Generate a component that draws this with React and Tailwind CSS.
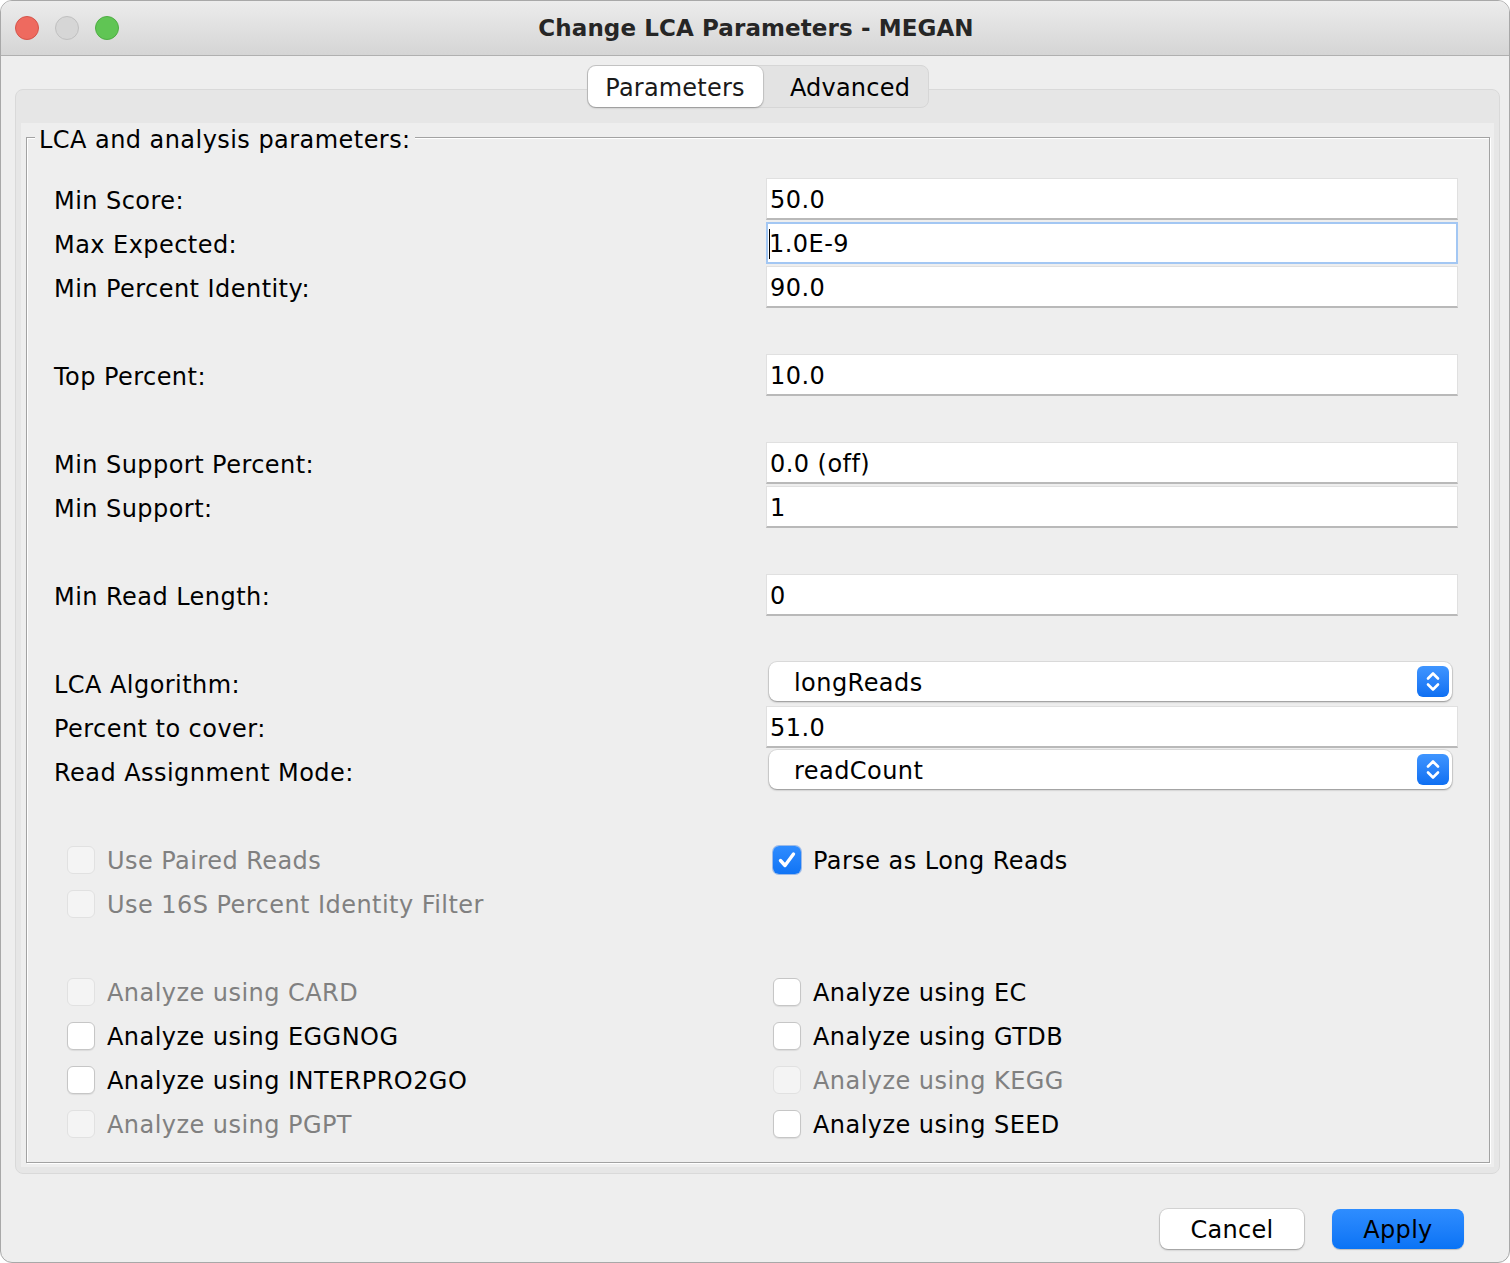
import React from "react";

const FONT = "font-['DejaVu_Sans','Noto_Sans',sans-serif]";

function TextField({ value, focused }) {
  if (focused) {
    return (
      <div className="h-[42px] bg-white border-2 border-[#a3c7f3] flex items-center pl-[1px] pt-[2px] text-[24px] tracking-[0.45px] text-black">
        <span className="inline-block w-px h-[30px] bg-black mr-[-1px]" />
        <span>{value}</span>
      </div>
    );
  }
  return (
    <div className="h-[42px] bg-white border border-[#e0e0e0] border-b-2 border-b-[#b9b9b9] flex items-center pl-[3px] pt-[2px] text-[24px] tracking-[0.45px] text-black">
      {value}
    </div>
  );
}

function Combo({ value }) {
  return (
    <div className="ml-[3px] mr-[6px] h-[39px] rounded-[8px] bg-white shadow-[0_0_0_1px_rgba(0,0,0,0.07),0_1px_2px_rgba(0,0,0,0.35)] flex items-center justify-between pl-[25px] pr-[3px] text-[24px] tracking-[0.45px] text-black">
      <span className="pt-[2px]">{value}</span>
      <div className="w-[32px] h-[31px] rounded-[6px] bg-gradient-to-b from-[#3f95ff] to-[#0d6ff2] flex items-center justify-center">
        <svg width="32" height="31" viewBox="0 0 32 31" fill="none" stroke="white" strokeWidth="2.6" strokeLinecap="round" strokeLinejoin="round">
          <path d="M11 12.5 L16 7.5 L21 12.5" />
          <path d="M11 18.5 L16 23.5 L21 18.5" />
        </svg>
      </div>
    </div>
  );
}

function Checkbox({ label, state }) {
  let box;
  if (state === "checked") {
    box = (
      <div className="w-[28px] h-[28px] rounded-[6px] bg-gradient-to-b from-[#2e8cff] to-[#0f74f5] shadow-[0_0_0_1px_rgba(0,90,220,0.35)] flex items-center justify-center">
        <svg width="28" height="28" viewBox="0 0 28 28" fill="none" stroke="white" strokeWidth="3.4" strokeLinecap="round" strokeLinejoin="round">
          <path d="M7.5 14.5 L12 19.5 L20.5 8" />
        </svg>
      </div>
    );
  } else if (state === "enabled") {
    box = (
      <div className="w-[28px] h-[28px] rounded-[6px] bg-white border border-[#c6c6c6] shadow-[0_1px_1px_rgba(0,0,0,0.08)]" />
    );
  } else {
    box = (
      <div className="w-[28px] h-[28px] rounded-[6px] bg-[#f4f4f4] border border-[#e1e1e1]" />
    );
  }
  return (
    <div className="flex items-center gap-[12px]">
      {box}
      <span className={`text-[24px] tracking-[0.45px] pt-[2px] ${state === "disabled" ? "text-[#808080]" : "text-black"}`}>{label}</span>
    </div>
  );
}

const fieldRows = [
  { label: "Min Score:", value: "50.0" },
  { label: "Max Expected:", value: "1.0E-9", focused: true },
  { label: "Min Percent Identity:", value: "90.0" },
  null,
  { label: "Top Percent:", value: "10.0" },
  null,
  { label: "Min Support Percent:", value: "0.0 (off)" },
  { label: "Min Support:", value: "1" },
  null,
  { label: "Min Read Length:", value: "0" },
  null,
  { label: "LCA Algorithm:", combo: "longReads" },
  { label: "Percent to cover:", value: "51.0" },
  { label: "Read Assignment Mode:", combo: "readCount" },
  null,
];

const checkRows = [
  [{ label: "Use Paired Reads", state: "disabled" }, { label: "Parse as Long Reads", state: "checked" }],
  [{ label: "Use 16S Percent Identity Filter", state: "disabled" }, null],
  null,
  [{ label: "Analyze using CARD", state: "disabled" }, { label: "Analyze using EC", state: "enabled" }],
  [{ label: "Analyze using EGGNOG", state: "enabled" }, { label: "Analyze using GTDB", state: "enabled" }],
  [{ label: "Analyze using INTERPRO2GO", state: "enabled" }, { label: "Analyze using KEGG", state: "disabled" }],
  [{ label: "Analyze using PGPT", state: "disabled" }, { label: "Analyze using SEED", state: "enabled" }],
];

export default function App() {
  return (
    <div className={`w-[1510px] h-[1263px] bg-white ${FONT}`}>
      <div className="w-full h-full rounded-[12px] border border-[#a8a8a8] bg-[#eeeeee] overflow-hidden flex flex-col">
        {/* Title bar */}
        <div className="h-[55px] shrink-0 bg-gradient-to-b from-[#ececec] to-[#d5d5d5] border-b border-[#b0b0b0] grid grid-cols-[1fr_auto_1fr] items-center">
          <div className="flex items-center gap-[16px] pl-[14px]">
            <div className="w-[24px] h-[24px] rounded-full bg-[#ee6a5f] border border-[#d5544a]" />
            <div className="w-[24px] h-[24px] rounded-full bg-[#d6d6d6] border border-[#c0c0c0]" />
            <div className="w-[24px] h-[24px] rounded-full bg-[#60c554] border border-[#4ead43]" />
          </div>
          <div className="text-[23px] font-bold text-[#262626] pl-[2px] tracking-[0.1px]">Change LCA Parameters - MEGAN</div>
          <div />
        </div>

        {/* Tabs */}
        <div className="ml-[14px] mr-[9px] mt-[9px] flex justify-center relative z-10">
          <div className="flex h-[43px] rounded-[8px] bg-[#e3e3e3] border border-[#d6d6d6]">
            <div className="w-[175px] h-[41px] rounded-[8px] bg-white shadow-[0_0_0_1px_rgba(0,0,0,0.08),0_1px_2px_rgba(0,0,0,0.25)] flex items-center justify-center pt-[2px] text-[24px] tracking-[0.2px] text-[#1a1a1a]">
              Parameters
            </div>
            <div className="w-[165px] flex items-center justify-center pl-[10px] pt-[2px] text-[24px] tracking-[0.2px] text-black">Advanced</div>
          </div>
        </div>

        {/* Tab pane */}
        <div className="ml-[14px] mr-[9px] mt-[-19px] rounded-[8px] border border-[#d9d9d9] bg-[#e6e6e6] pt-[33px] px-[5px] pb-[6px]">
          <div className="bg-[#eeeeee] pt-[14px] pl-[5px] pr-[4px] pb-[4px]">
            <div className="relative border border-[#a2a2a2] shadow-[1px_1px_0_#ffffff,inset_1px_1px_0_#ffffff] pt-[40px] pb-[16px] pl-[27px] pr-[31px]">
              <div className="absolute left-[8px] top-[-12px] px-[4px] bg-[#eeeeee] text-[24px] tracking-[0.45px] leading-[28px] text-black">
                LCA and analysis parameters:
              </div>
              <div className="grid grid-cols-[712px_692px]">
                {fieldRows.map((r, i) =>
                  r ? (
                    <React.Fragment key={i}>
                      <div className="h-[44px] flex items-center pt-[2px] text-[24px] tracking-[0.45px] text-black">{r.label}</div>
                      <div className="h-[44px]">
                        {r.combo ? <Combo value={r.combo} /> : <TextField value={r.value} focused={r.focused} />}
                      </div>
                    </React.Fragment>
                  ) : (
                    <div key={i} className="col-span-2 h-[44px]" />
                  )
                )}
                {checkRows.map((r, i) =>
                  r ? (
                    <React.Fragment key={"c" + i}>
                      <div className="h-[44px] flex items-center pl-[13px]">
                        {r[0] && <Checkbox label={r[0].label} state={r[0].state} />}
                      </div>
                      <div className="h-[44px] flex items-center pl-[7px]">
                        {r[1] && <Checkbox label={r[1].label} state={r[1].state} />}
                      </div>
                    </React.Fragment>
                  ) : (
                    <div key={"c" + i} className="col-span-2 h-[44px]" />
                  )
                )}
              </div>
            </div>
          </div>
        </div>

        {/* Buttons */}
        <div className="flex justify-end gap-[28px] mt-[35px] mr-[45px]">
          <div className="w-[144px] h-[40px] rounded-[8px] bg-white shadow-[0_0_0_1px_rgba(0,0,0,0.1),0_1px_2px_rgba(0,0,0,0.3)] flex items-center justify-center pt-[2px] text-[24px] tracking-[0.3px] text-black">
            Cancel
          </div>
          <div className="w-[132px] h-[40px] rounded-[8px] bg-gradient-to-b from-[#2e8dff] to-[#0873f5] shadow-[0_1px_1px_rgba(0,0,0,0.2)] flex items-center justify-center pt-[2px] text-[24px] tracking-[0.3px] text-black">
            Apply
          </div>
        </div>
      </div>
    </div>
  );
}
